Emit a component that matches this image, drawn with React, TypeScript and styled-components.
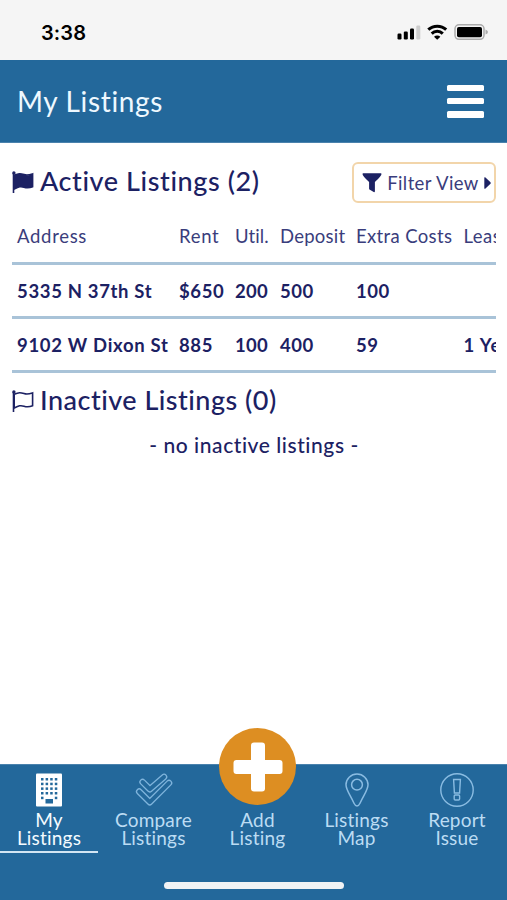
import React from "react";
import styled, { createGlobalStyle } from "styled-components";

const NAVY = "#1c2163";
const BLUE = "#23689b";

const GlobalStyle = createGlobalStyle`
  * { box-sizing: border-box; }
  body { margin: 0; background: #fff; font-family: Lato, "Noto Sans", sans-serif; color: ${NAVY}; }
`;

const Screen = styled.div`
  width: 507px;
  height: 900px;
  display: flex;
  flex-direction: column;
  overflow: hidden;
`;

const StatusBar = styled.div`
  height: 60px;
  flex: none;
  background: #f5f5f5;
  color: #000;
  display: flex;
  justify-content: space-between;
  align-items: center;
  padding: 4px 19px 0 41px;
`;

const Clock = styled.span`
  padding-top: 1px;
  font: 600 20px/24px Inter, sans-serif;
  letter-spacing: 0.1px;
`;

const StatusIcons = styled.svg`
  width: 92px;
  height: 18px;
`;

const Header = styled.header`
  height: 83px;
  flex: none;
  background: ${BLUE};
  border-bottom: 1px solid #4a82ad;
  display: flex;
  align-items: center;
  justify-content: space-between;
  padding: 0 23px 0 17px;
`;

const Title = styled.h1`
  margin: 0;
  font-size: 28px;
  line-height: 36px;
  font-weight: 400;
  letter-spacing: 0.65px;
  color: #eef8ff;
`;

const MenuButton = styled.button`
  width: 37px;
  height: 33px;
  padding: 0;
  border: 0;
  background: none;
  display: flex;
  flex-direction: column;
  justify-content: space-between;
`;

const MenuBar = styled.span`
  width: 100%;
  height: 6.5px;
  border-radius: 1.5px;
  background: #fff;
`;

const Content = styled.main`
  flex: 1;
  padding: 19px 11px 0 12px;
`;

const SectionHead = styled.div<{ $h: number }>`
  display: flex;
  align-items: center;
  height: ${(p) => p.$h}px;
`;

const FlagIcon = styled.svg`
  width: 22px;
  height: 22px;
  margin: 0 6px 2px 0;
`;

const SectionTitle = styled.h2<{ $ls: number }>`
  margin: 0;
  padding-bottom: 4px;
  font-size: 27px;
  line-height: 34px;
  font-weight: 500;
  letter-spacing: ${(p) => p.$ls}px;
  white-space: nowrap;
`;

const FilterButton = styled.button`
  margin-left: auto;
  width: 144px;
  height: 41px;
  padding: 0 3px 0 8px;
  border: 2px solid #f2d5aa;
  border-radius: 6px;
  background: #fff;
  display: flex;
  align-items: center;
  justify-content: space-between;
  font: 400 18.5px/24px Lato, sans-serif;
  letter-spacing: 0.4px;
  color: #3a3d7c;
  white-space: nowrap;
  svg { flex: none; }
`;

const TableClip = styled.div`
  overflow: hidden;
`;

const Row = styled.div<{ $head?: boolean }>`
  width: 560px;
  height: ${(p) => (p.$head ? 62 : 54)}px;
  padding: ${(p) => (p.$head ? "7px 0 0 5px" : "0 0 0 5px")};
  border-bottom: 3px solid #a9c3d8;
  display: grid;
  grid-template-columns: 162px 56px 45px 76px 107.5px 1fr;
  align-items: center;
  font-size: 18.5px;
  line-height: 24px;
  font-weight: ${(p) => (p.$head ? 400 : 700)};
  color: ${(p) => (p.$head ? "#3a3d7c" : NAVY)};
  white-space: nowrap;
`;

const Cell = styled.span<{ $ls: number }>`
  letter-spacing: ${(p) => p.$ls}px;
`;

const Empty = styled.p`
  margin: 0;
  text-align: center;
  font-size: 21px;
  line-height: 28px;
  font-weight: 500;
  letter-spacing: 0.56px;
`;

const Nav = styled.nav`
  height: 136px;
  flex: none;
  background: ${BLUE};
  border-top: 1px solid #4a82ad;
  display: flex;
  flex-direction: column;
  align-items: center;
`;

const Tabs = styled.div`
  width: 100%;
  display: grid;
  grid-template-columns: 98px 111px 97px 101px 100px;
`;

const Tab = styled.div<{ $active?: boolean }>`
  height: 88px;
  padding-top: 8px;
  border-bottom: 2px solid ${(p) => (p.$active ? "#d3e6f4" : "transparent")};
  display: flex;
  flex-direction: column;
  align-items: center;
  color: ${(p) => (p.$active ? "#f4fbff" : "#bcdcf3")};
`;

const TabIcon = styled.div`
  height: 34px;
  margin-bottom: 4px;
`;

const TabLine = styled.span`
  font-size: 19px;
  line-height: 18px;
  letter-spacing: 0.2px;
  white-space: nowrap;
`;

const AddButton = styled.div`
  width: 77px;
  height: 77px;
  margin-top: -45px;
  margin-bottom: 6px;
  flex: none;
  border-radius: 50%;
  background: #dd8e22;
  display: grid;
  place-items: center;
`;

const HomeBar = styled.div`
  width: 180px;
  height: 7px;
  margin-top: 29px;
  border-radius: 4px;
  background: #f1f3f5;
`;

const Flag = ({ filled }: { filled?: boolean }) => (
  <FlagIcon viewBox="0 0 22 22" fill="none" stroke={NAVY} strokeWidth="1.6">
    <circle cx="1.9" cy="2" r="1.7" fill={NAVY} stroke="none" />
    <path d="M1.5 2V22" />
    <path
      d="M2.2 4.2C7 2.2 8.5 2.4 12 3.6S17.500 4 20.600 2.900V15.700C17.500 17 15.500 17.300 12 16.200S7 15.700 2.200 18Z"
      fill={filled ? NAVY : "none"}
    />
  </FlagIcon>
);

const Building = () => (
  <svg width="26" height="34" viewBox="0 0 26 34">
    <rect y="0.500" width="26" height="33" rx="1" fill="#fff" />
    {[5, 9.700, 14.400, 19, 23.700].map((y, r) =>
      [5, 9.600, 14.200, 18.800].map((x, c) =>
        r === 4 && (c === 1 || c === 2) ? null : <rect key={x + "-" + y} x={x} y={y} width="2.500" height="2.500" fill={BLUE} />
      )
    )}
    <rect x="9.500" y="26" width="7.500" height="4.500" fill={BLUE} />
  </svg>
);

const CHECKS = ["M7.600 9L14.800 16.200L29 3.900", "M4.200 18.600L14.800 29.200L34 10"];

const Checks = () => (
  <svg width="38" height="34" viewBox="0 0 38 34" fill="none" strokeLinecap="round" strokeLinejoin="round">
    {CHECKS.map((d) => (
      <g key={d}>
        <path d={d} stroke="#7fb4dc" strokeWidth="6.600" />
        <path d={d} stroke={BLUE} strokeWidth="4" />
      </g>
    ))}
  </svg>
);

const Pin = () => (
  <svg width="24" height="34" viewBox="0 0 24 34" fill="none" stroke="#8abce2" strokeWidth="1.500">
    <path d="M12 33C10.500 33 9.800 32 9 30.300C5 21.500 1 17 1 11.800A11 10.800 0 0 1 23 11.800C23 17 19 21.500 15 30.300C14.200 32 13.500 33 12 33Z" />
    <circle cx="12" cy="11.700" r="5.400" />
  </svg>
);

const Alert = () => (
  <svg width="34" height="34" viewBox="0 0 34 34" fill="none" stroke="#8abce2" strokeWidth="1.400">
    <circle cx="17" cy="17" r="16.200" />
    <path d="M13.600 6.500H20.400L19.600 20H14.400Z" />
    <rect x="14.200" y="22" width="5.400" height="5" rx="1" />
  </svg>
);

type Item = [text: string, spacing: number];

const heads: Item[] = [["Address", 0.7], ["Rent", 0.7], ["Util.", 0.1], ["Deposit", 0.25], ["Extra Costs", 0.36], ["Lease", 0.5]];
const rows: Item[][] = [
  [["5335 N 37th St", 0.66], ["$650", 0.6], ["200", 0.3], ["500", 0.5], ["100", 0.5], ["", 0]],
  [["9102 W Dixon St", 0.7], ["885", 0.6], ["100", 0.3], ["400", 0.5], ["59", 0.5], ["1 Year", 0.9]],
];

const cells = (items: Item[]) => items.map(([text, ls], i) => <Cell key={i} $ls={ls}>{text}</Cell>);

export default function App() {
  return (
    <Screen>
      <GlobalStyle />
      <StatusBar>
        <Clock>3:38</Clock>
        <StatusIcons viewBox="0 0 92 18">
          <rect x="1.500" y="10.500" width="4" height="6" rx="1.200" />
          <rect x="7.800" y="8.500" width="4" height="8" rx="1.200" />
          <rect x="14" y="5.500" width="4" height="11" rx="1.200" />
          <rect x="20.300" y="2.500" width="4" height="14" rx="1.200" fill="#cdcdcd" />
          <g fill="none" stroke="#000" strokeWidth="3">
            <path d="M32.300 6.700A13 13 0 0 1 50.200 6.700" />
            <path d="M35.700 10.600A8 8 0 0 1 46.800 10.600" />
          </g>
          <path d="M41.200 16.800L38 13.700A4.600 4.600 0 0 1 44.400 13.700Z" />
          <rect x="59" y="1.800" width="29" height="14.500" rx="4" fill="#f5f5f5" stroke="#ababab" strokeWidth="1.500" />
          <rect x="61" y="4" width="25" height="10.200" rx="1.800" />
          <path d="M89.500 6.500Q92 7.500 92 9T89.500 11.500Z" fill="#ababab" />
        </StatusIcons>
      </StatusBar>
      <Header>
        <Title>My Listings</Title>
        <MenuButton aria-label="Menu"><MenuBar /><MenuBar /><MenuBar /></MenuButton>
      </Header>
      <Content>
        <SectionHead $h={41}>
          <Flag filled />
          <SectionTitle $ls={0.58}>Active Listings (2)</SectionTitle>
          <FilterButton>
            <svg width="20" height="20" viewBox="0 0 20 20" fill={NAVY}>
              <path d="M.5 1Q.5.300 1.200.300H18.800Q19.500.300 19.500 1Q19.500 3 12.900 9V18.500Q12.500 19.500 11.700 19L7.500 16.500Q7.100 16.300 7.100 15.700V9Q.5 3 .5 1Z" />
            </svg>
            <span>Filter View</span>
            <svg width="7" height="12" viewBox="0 0 7 12" fill={NAVY}>
              <path d="M.3.500Q.8 0 1.500.500L6.500 5.300Q7 6 6.500 6.700L1.500 11.500Q.8 12 .3 11.500Z" />
            </svg>
          </FilterButton>
        </SectionHead>
        <TableClip>
          <Row $head>{cells(heads)}</Row>
          {rows.map((r, i) => <Row key={i}>{cells(r)}</Row>)}
        </TableClip>
        <SectionHead $h={58}>
          <Flag />
          <SectionTitle $ls={0.48}>Inactive Listings (0)</SectionTitle>
        </SectionHead>
        <Empty>- no inactive listings -</Empty>
      </Content>
      <Nav>
        <Tabs>
          <Tab $active><TabIcon><Building /></TabIcon><TabLine>My</TabLine><TabLine>Listings</TabLine></Tab>
          <Tab><TabIcon><Checks /></TabIcon><TabLine>Compare</TabLine><TabLine>Listings</TabLine></Tab>
          <Tab>
            <AddButton>
              <svg width="50" height="50" viewBox="0 0 50 50" fill="#fff">
                <rect x="18" y="0.500" width="14" height="49" rx="3" />
                <rect x="0.500" y="18" width="49" height="14" rx="3" />
              </svg>
            </AddButton>
            <TabLine>Add</TabLine><TabLine>Listing</TabLine>
          </Tab>
          <Tab><TabIcon><Pin /></TabIcon><TabLine>Listings</TabLine><TabLine>Map</TabLine></Tab>
          <Tab><TabIcon><Alert /></TabIcon><TabLine>Report</TabLine><TabLine>Issue</TabLine></Tab>
        </Tabs>
        <HomeBar />
      </Nav>
    </Screen>
  );
}
